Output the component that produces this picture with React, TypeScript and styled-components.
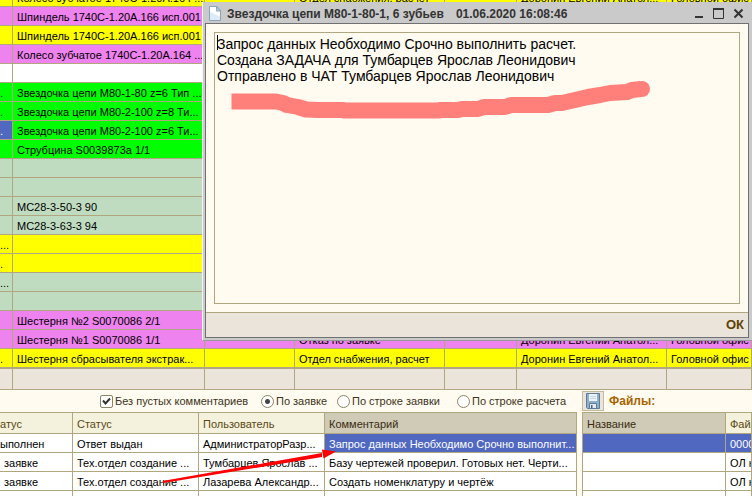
import React, { useState } from "react";
import styled, { createGlobalStyle } from "styled-components";

const line = "#b0a680";
const cream = "#fffbf0";
const beige = "#ebe4da";
const blue = "#5068c0";

const fills = {
  yellow: "#ffff00",
  violet: "#ee82ee",
  white: "#ffffff",
  green: "#00ff00",
  sage: "#c0dcc0",
  blue,
};
type Fill = keyof typeof fills;

const GlobalStyle = createGlobalStyle`
  * { box-sizing: border-box; }
  body {
    margin: 0;
    overflow: hidden;
    background: ${cream};
    color: #000;
    font: 11px/16px "Liberation Sans", Arial, sans-serif;
  }
`;

const Page = styled.main`
  position: relative;
  display: flex;
  flex-direction: column;
  height: 100vh;
  overflow: hidden;
`;

const GridView = styled.section`
  flex: none;
  overflow: hidden;
`;

const OrdersTable = styled.table`
  width: 100%;
  margin-top: -12px;
  table-layout: fixed;
  border-collapse: separate;
  border-spacing: 0;
`;

const Col = styled.col<{ $w?: number }>`
  width: ${(p) => (p.$w ? `${p.$w}px` : "auto")};
`;

const Cell = styled.td<{ $fill: Fill; $edge?: boolean }>`
  height: 19px;
  padding: 2px 0 0 ${(p) => (p.$edge ? 0 : 4)}px;
  overflow: hidden;
  white-space: nowrap;
  background: ${(p) => fills[p.$fill]};
  border-right: 1px solid ${line};
  border-bottom: 1px solid ${line};
  color: ${(p) => (p.$fill === "blue" ? "#fff" : "#000")};
`;

const FootCell = styled.td`
  height: 22px;
  padding: 0;
  background: ${beige};
  border-top: 1px solid ${line};
  border-right: 1px solid ${line};
  border-bottom: 1px solid ${line};
`;

const Lower = styled.div`
  flex: 1;
  display: flex;
  gap: 5px;
  min-height: 0;
`;

const Panel = styled.section<{ $grow: number }>`
  flex: ${(p) => p.$grow} 1 0;
  min-width: 0;
  display: flex;
  flex-direction: column;
`;

const Filters = styled.form`
  flex: none;
  display: grid;
  grid-template-columns: 161px 76px 120px auto;
  align-items: center;
  height: 22px;
  padding-left: 100px;
`;

const Option = styled.label`
  display: flex;
  align-items: center;
  gap: 2px;
  white-space: nowrap;
  color: #3b3420;
`;

const Check = styled.input`
  appearance: none;
  width: 13px;
  height: 13px;
  margin: 0;
  border: 1px solid #8a8468;
  border-radius: 2px;
  background: #fff;
  &:checked {
    background: #fff
      url("data:image/svg+xml,%3Csvg xmlns='http://www.w3.org/2000/svg' viewBox='0 0 11 11'%3E%3Cpath d='M2 4.5L4.5 7.5L9 2.5' fill='none' stroke='%23333' stroke-width='2'/%3E%3C/svg%3E")
      center / 11px 11px no-repeat;
  }
`;

const Radio = styled.input`
  appearance: none;
  width: 13px;
  height: 13px;
  margin: 0;
  border: 1px solid #8a8468;
  border-radius: 50%;
  background: #fff;
  &:checked {
    background: radial-gradient(circle, #444 0 2px, #fff 3px);
  }
`;

const FilesBar = styled.header`
  flex: none;
  display: flex;
  align-items: center;
  gap: 5px;
  height: 22px;
`;

const SaveButton = styled.button`
  display: grid;
  place-items: center;
  width: 22px;
  height: 20px;
  padding: 0;
  background: ${beige};
  border: 1px solid #c4bc9c;
`;

const FilesTitle = styled.h2`
  margin: 0;
  font: bold 12px/18px "Liberation Sans", Arial, sans-serif;
  color: #a86400;
`;

const ListFrame = styled.div<{ $left?: boolean }>`
  flex: 1;
  overflow: hidden;
  background: #fff;
  border-top: 1px solid ${line};
  border-left: ${(p) => (p.$left ? `1px solid ${line}` : "none")};
`;

const ListTable = styled.table`
  width: 100%;
  height: 100%;
  table-layout: fixed;
  border-collapse: separate;
  border-spacing: 0;
`;

const Head = styled.th<{ $active?: boolean; $edge?: boolean }>`
  height: 21px;
  padding: 1px 0 0 ${(p) => (p.$edge ? 0 : 4)}px;
  overflow: hidden;
  white-space: nowrap;
  text-align: left;
  font-weight: normal;
  color: ${(p) => (p.$active ? "#3a2c10" : "#5a4814")};
  background: ${(p) => (p.$active ? "#cfcbb7" : "#f4f1dc")};
  border-right: 1px solid ${line};
  border-bottom: 1px solid ${line};
`;

const Item = styled.td<{ $selected?: boolean; $edge?: boolean }>`
  height: 19px;
  padding: 2px 0 0 ${(p) => (p.$edge ? 0 : 4)}px;
  overflow: hidden;
  white-space: nowrap;
  background: ${(p) => (p.$selected ? blue : "#fff")};
  color: ${(p) => (p.$selected ? "#fff" : "#000")};
  border-right: 1px solid ${line};
  border-bottom: 1px solid ${line};
`;

const Rest = styled.td`
  padding: 0;
  border-right: 1px solid ${line};
`;

const Dialog = styled.section`
  position: absolute;
  z-index: 1;
  top: 2px;
  left: 202px;
  right: 0;
  height: 339px;
  display: flex;
  flex-direction: column;
  padding: 0 3px 2px 2px;
  background: #cacaca;
  border-left: 1px solid #f4f4f4;
  border-bottom: 1px solid #9a9a9a;
`;

const TitleBar = styled.header`
  flex: none;
  display: flex;
  align-items: center;
  height: 21px;
  padding: 2px 1px 0 4px;
  color: #333;
`;

const Title = styled.h1`
  flex: 1;
  display: flex;
  gap: 12px;
  margin: 0 0 0 6px;
  white-space: nowrap;
  font: bold 12px/18px "Liberation Sans", Arial, sans-serif;
`;

const WindowButton = styled.button`
  display: grid;
  place-items: center;
  width: 20px;
  height: 18px;
  padding: 0;
  border: 0;
  background: none;
  color: #333;
`;

const Body = styled.div`
  flex: 1;
  display: flex;
  flex-direction: column;
  min-height: 0;
  background: ${cream};
  border: 1px solid #707070;
`;

const NoteArea = styled.div`
  position: relative;
  flex: 1;
  display: flex;
  padding: 8px;
`;

const Note = styled.textarea`
  flex: 1;
  padding: 3px 2px;
  resize: none;
  outline: 0;
  border: 1px solid ${line};
  border-radius: 0;
  background: ${cream};
  color: #000;
  font: 14px/16px "Liberation Sans", Arial, sans-serif;
`;

const Caret = styled.span`
  position: absolute;
  top: 11px;
  left: 11px;
  width: 1px;
  height: 15px;
  background: #000;
`;

const Marker = styled.svg`
  position: absolute;
  top: 52px;
  left: 20px;
  pointer-events: none;
`;

const Actions = styled.footer`
  flex: none;
  display: flex;
  justify-content: flex-end;
  height: 25px;
  background: ${beige};
  border-top: 1px solid ${line};
`;

const OkButton = styled.button`
  padding: 0 4px;
  border: 0;
  background: none;
  color: #5c4300;
  font: bold 13px/24px "Liberation Sans", Arial, sans-serif;
`;

const Arrow = styled.svg`
  position: absolute;
  z-index: 2;
  top: 444px;
  left: 156px;
  pointer-events: none;
`;

type Row = { fill: Fill; edge?: string; edgeFill?: Fill; name?: string; reason?: string; person?: string; office?: string };

const person = "Доронин Евгений Анатол...";
const office = "Головной офис";
const rows: Row[] = [
  { fill: "yellow", name: "Колесо зубчатое 1740С-1.20А.164 ...", reason: "Отдел снабжения, расчет", person, office },
  { fill: "violet", name: "Шпиндель 1740С-1.20А.166 исп.001" },
  { fill: "yellow", name: "Шпиндель 1740С-1.20А.166 исп.001" },
  { fill: "violet", name: "Колесо зубчатое 1740С-1.20А.164 ..." },
  { fill: "white" },
  { fill: "green", edge: ".", name: "Звездочка цепи М80-1-80 z=6 Тип ..." },
  { fill: "green", edge: ".", name: "Звездочка цепи М80-2-100 z=8 Ти..." },
  { fill: "green", edge: ".", edgeFill: "blue", name: "Звездочка цепи М80-2-100 z=6 Ти..." },
  { fill: "green", name: "Струбцина S0039873а 1/1" },
  { fill: "sage" },
  { fill: "sage" },
  { fill: "sage", name: "МС28-3-50-3 90" },
  { fill: "sage", name: "МС28-3-63-3 94" },
  { fill: "yellow", edge: "..." },
  { fill: "yellow", edge: "." },
  { fill: "sage", edge: "..." },
  { fill: "sage" },
  { fill: "violet", name: "Шестерня №2 S0070086 2/1" },
  { fill: "violet", name: "Шестерня №1 S0070086 1/1", reason: "Отказ по заявке", person, office },
  { fill: "yellow", edge: ".", name: "Шестерня сбрасывателя экстрак...", reason: "Отдел снабжения, расчет", person, office },
];

const comments = [
  ["ыполнен", "Ответ выдан", "АдминистраторРазр...", "Запрос данных Необходимо Срочно выполнит..."],
  ["заявке", "Тех.отдел создание ...", "Тумбарцев Ярослав ...", "Базу чертежей проверил. Готовых нет. Черти..."],
  ["заявке", "Тех.отдел создание ...", "Лазарева Александр...", "Создать номенклатуру и чертёж"],
];

const scopes = ["По заявке", "По строке заявки", "По строке расчета"];

export default function App() {
  const [onlyFilled, setOnlyFilled] = useState(true);
  const [scope, setScope] = useState(0);
  const [note, setNote] = useState(
    "Запрос данных Необходимо Срочно выполнить расчет.\nСоздана ЗАДАЧА для Тумбарцев Ярослав Леонидович\nОтправлено в ЧАТ Тумбарцев Ярослав Леонидович"
  );

  return (
    <Page>
      <GlobalStyle />
      <GridView>
        <OrdersTable>
          <colgroup>
            {[13, 192, 90, 150, 72, 150, undefined].map((w, i) => (
              <Col key={i} $w={w} />
            ))}
          </colgroup>
          <tbody>
            {rows.map((r, i) => (
              <tr key={i}>
                <Cell $fill={r.edgeFill ?? r.fill} $edge>{r.edge}</Cell>
                <Cell $fill={r.fill}>{r.name}</Cell>
                <Cell $fill={r.fill} />
                <Cell $fill={r.fill}>{r.reason}</Cell>
                <Cell $fill={r.fill} />
                <Cell $fill={r.fill}>{r.person}</Cell>
                <Cell $fill={r.fill}>{r.office}</Cell>
              </tr>
            ))}
            <tr>
              {[0, 1, 2, 3, 4, 5, 6].map((i) => (
                <FootCell key={i} />
              ))}
            </tr>
          </tbody>
        </OrdersTable>
      </GridView>

      <Lower>
        <Panel $grow={577}>
          <Filters>
            <Option>
              <Check type="checkbox" checked={onlyFilled} onChange={() => setOnlyFilled(!onlyFilled)} />
              Без пустых комментариев
            </Option>
            {scopes.map((s, i) => (
              <Option key={s}>
                <Radio type="radio" name="scope" checked={scope === i} onChange={() => setScope(i)} />
                {s}
              </Option>
            ))}
          </Filters>
          <ListFrame>
            <ListTable>
              <colgroup>
                <Col $w={73} />
                <Col $w={126} />
                <Col $w={126} />
                <Col />
              </colgroup>
              <thead>
                <tr>
                  <Head $edge>атус</Head>
                  <Head>Статус</Head>
                  <Head>Пользователь</Head>
                  <Head $active>Комментарий</Head>
                </tr>
              </thead>
              <tbody>
                {comments.map((c, i) => (
                  <tr key={i}>
                    <Item $edge={i === 0}>{c[0]}</Item>
                    <Item>{c[1]}</Item>
                    <Item>{c[2]}</Item>
                    <Item $selected={i === 0}>{c[3]}</Item>
                  </tr>
                ))}
                <tr>
                  <Rest />
                  <Rest />
                  <Rest />
                  <Rest />
                </tr>
              </tbody>
            </ListTable>
          </ListFrame>
        </Panel>

        <Panel $grow={170}>
          <FilesBar>
            <SaveButton type="button" aria-label="Сохранить">
              <svg width="16" height="16" viewBox="0 0 16 16">
                <path d="M1.500.5h13v15h-12l-1-1z" fill="#8fb0ca" stroke="#5d7c9a" />
                <path d="M4 1h8v7H4z" fill="#eef5fa" />
                <path d="M5 3.500h6M5 5.500h6" stroke="#c3d5e2" />
                <path d="M4.500 10.500h7v5h-7z" fill="#e6eaec" stroke="#5d7c9a" />
                <path d="M6 12h1.500v3H6z" fill="#4a6480" />
              </svg>
            </SaveButton>
            <FilesTitle>Файлы:</FilesTitle>
          </FilesBar>
          <ListFrame $left>
            <ListTable>
              <colgroup>
                <Col $w={143} />
                <Col />
              </colgroup>
              <thead>
                <tr>
                  <Head $active>Название</Head>
                  <Head>Файл</Head>
                </tr>
              </thead>
              <tbody>
                {["00000", "ОЛ на", "ОЛ на"].map((t, i) => (
                  <tr key={i}>
                    <Item $selected={i === 0} />
                    <Item $selected={i === 0}>{t}</Item>
                  </tr>
                ))}
                <tr>
                  <Rest />
                  <Rest />
                </tr>
              </tbody>
            </ListTable>
          </ListFrame>
        </Panel>
      </Lower>

      <Dialog role="dialog" aria-labelledby="dialog-title">
        <TitleBar>
          <svg width="12" height="15" viewBox="0 0 12 15">
            <path d="M.5.5h7.500l3.500 4v10H.5z" fill="#dcebf6" stroke="#8ba3b8" />
            <path d="M1 1h6v4.500h4v5L1 6z" fill="#fff" />
            <path d="M7.500.5v4.500h4z" fill="#b4cbde" stroke="#7f99b0" strokeWidth=".7" />
          </svg>
          <Title id="dialog-title">
            <span>Звездочка цепи М80-1-80-1, 6 зубьев</span>
            <span>01.06.2020 16:08:46</span>
          </Title>
          <WindowButton type="button" aria-label="Свернуть">
            <svg width="11" height="11" viewBox="0 0 11 11">
              <path d="M2 9h8" stroke="currentColor" strokeWidth="2" />
            </svg>
          </WindowButton>
          <WindowButton type="button" aria-label="Развернуть">
            <svg width="11" height="11" viewBox="0 0 11 11">
              <path d="M.5 1h10v9.500H.5z" fill="none" stroke="currentColor" />
              <path d="M0 1h11" stroke="currentColor" strokeWidth="2" />
            </svg>
          </WindowButton>
          <WindowButton type="button" aria-label="Закрыть">
            <svg width="11" height="11" viewBox="0 0 11 11">
              <path d="M1.500 1.500l8 8M9.500 1.500l-8 8" stroke="currentColor" strokeWidth="2" />
            </svg>
          </WindowButton>
        </TitleBar>
        <Body>
          <NoteArea>
            <Note aria-label="Комментарий" spellCheck={false} value={note} onChange={(e) => setNote(e.target.value)} />
            <Caret />
            <Marker width="430" height="48" viewBox="226 76 430 48">
              <path
                d="M231.500 101.500H276L283 103L287 105L298 107L306 109.500L318 110H342L345 110.500H438L441 110H458L462 109H478L484 107H505L511 105H548L555 103H562L575 100L588 97L600 95L610 93L627 92L632 90L641 89"
                fill="none"
                stroke="#ff807a"
                strokeWidth="16"
                strokeLinejoin="round"
              />
              <circle cx="642" cy="89" r="8" fill="#ff807a" />
            </Marker>
          </NoteArea>
          <Actions>
            <OkButton type="button">ОК</OkButton>
          </Actions>
        </Body>
      </Dialog>

      <Arrow width="186" height="42" viewBox="156 444 186 42">
        <path d="M162.500 481L322 453V457L163.500 483z" fill="#f00" />
        <path d="M336 451.500L322 449.500L323.500 458.500z" fill="#f00" />
      </Arrow>
    </Page>
  );
}
